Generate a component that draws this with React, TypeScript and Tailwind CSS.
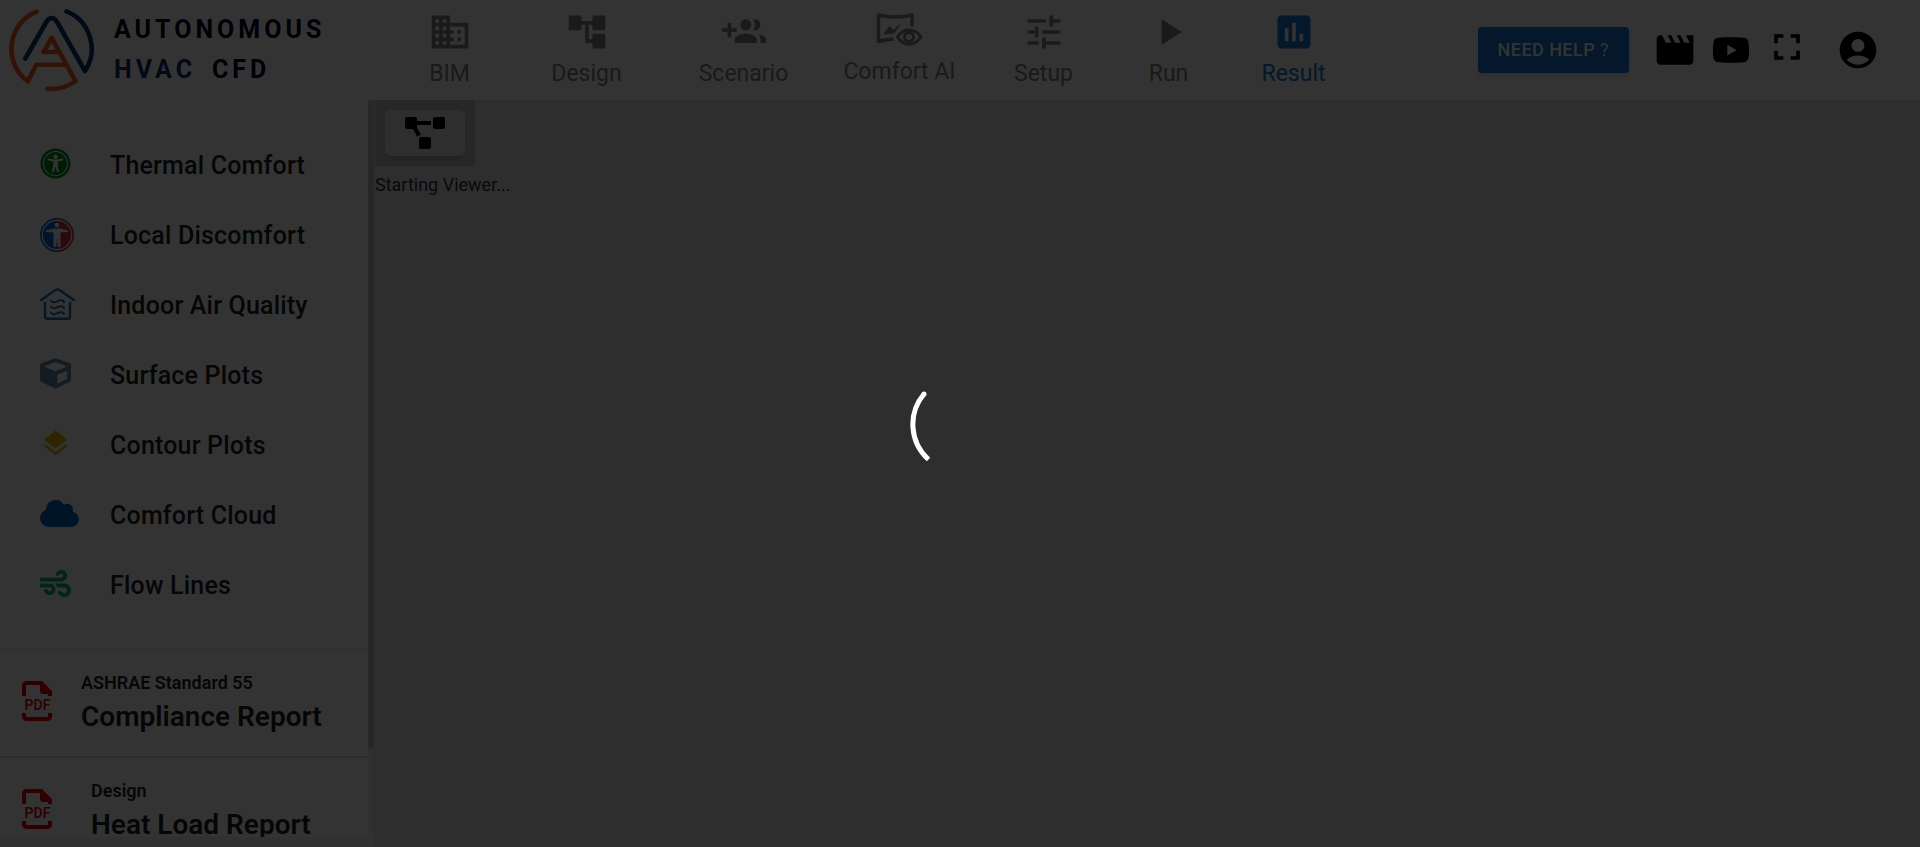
import type { ReactNode } from "react";
import {
  MdAccountCircle,
  MdAccountTree,
  MdAssessment,
  MdBusiness,
  MdFullscreen,
  MdLayers,
  MdMovie,
  MdPlayArrow,
  MdTune,
} from "react-icons/md";
import { FaCloud, FaCube, FaProjectDiagram, FaUniversalAccess, FaWind, FaYoutube } from "react-icons/fa";

function LogoMark() {
  return (
    <svg viewBox="0 0 88 84" className="h-[84px] w-[88px]" fill="none" strokeWidth="4.6" strokeLinecap="round" strokeLinejoin="round" aria-hidden="true">
      <path d="M28.500 3.600A40.400 40.400 0 0 0 19.800 73.500L28.300 56.800H57" stroke="#f05a1e" />
      <path d="M39.500 80.700A40.400 40.400 0 0 0 67.500 73L43.700 30L35.500 44H50" stroke="#f05a1e" />
      <path d="M58.500 3.400A40.400 40.400 0 0 1 77 63L48.800 13.500Q43.700 6.500 38.600 13.500L17.300 50.500" stroke="#05387a" />
    </svg>
  );
}

function GroupAddIcon() {
  return (
    <svg viewBox="0 0 24 24" className="size-11" fill="currentColor" aria-hidden="true">
      <path d="M8 10H5V7H3v3H0v2h3v3h2v-3h3v-2zm10 1c1.660 0 2.990-1.340 2.990-3S19.660 5 18 5c-.320 0-.630.050-.910.140.570.810.900 1.790.900 2.860s-.340 2.040-.900 2.860c.280.090.590.140.910.140zm-5 0c1.660 0 2.990-1.340 2.990-3S14.660 5 13 5c-1.660 0-3 1.340-3 3s1.340 3 3 3zm6.620 2.160c.830.730 1.380 1.660 1.380 2.840v2h3v-2c0-1.540-2.370-2.490-4.380-2.840zM13 13c-2 0-6 1-6 3v2h12v-2c0-2-4-3-6-3z" />
    </svg>
  );
}

function ComfortAiIcon() {
  return (
    <svg viewBox="0 0 48 42" className="h-[42px] w-12" fill="none" stroke="currentColor" strokeWidth="3.5" aria-hidden="true">
      <path d="M36 16.500V5C25.500 7.500 13.500 7.500 2.500 5V31.500C8 30 12.500 29.500 17.500 29" strokeLinejoin="round" />
      <path d="M7 24.500L13.500 16L17.500 20L23 14.500L24 15.500L18 23.500Z" fill="currentColor" stroke="none" />
      <path d="M21.500 27C27 17.500 39 17.500 45 27C39 36.500 27 36.500 21.500 27Z" strokeWidth="3" strokeLinejoin="round" />
      <circle cx="33" cy="27" r="4.500" strokeWidth="3" />
    </svg>
  );
}

function LocalDiscomfortIcon() {
  return (
    <svg viewBox="0 0 34 34" className="size-[34px]" aria-hidden="true">
      <path d="M17 0a17 17 0 0 0 0 34z" fill="#0d5fd8" />
      <path d="M17 0a17 17 0 0 1 0 34z" fill="#c8323c" />
      <circle cx="17" cy="17" r="14.700" fill="none" stroke="#fff" strokeWidth="1.200" />
      <circle cx="17" cy="7" r="2.300" fill="#fff" />
      <path d="M6 12.500L14 10.500H20L28 12.500V14L20.500 14.500V29H17.800L17 20L16.200 29H13.500V14.500L6 14Z" fill="#fff" />
    </svg>
  );
}

function AirQualityIcon() {
  return (
    <svg viewBox="0 0 35 32" className="h-8 w-[35px]" fill="none" stroke="#1976c2" strokeWidth="2.400" strokeLinecap="round" strokeLinejoin="round" aria-hidden="true">
      <path d="M1.200 12L15.500 2Q17.500 0.800 19.500 2L33.800 12" />
      <path d="M5 15V28.200Q5 30.700 7.500 30.700H27.500Q30 30.700 30 28.200V15" />
      <path d="M11 12.500Q12 15 15.500 14Q20 11.500 22.500 12.500Q24 13 24 14.500M11 18.500Q12 21 15.500 20Q20 17.500 22.500 18.500Q24 19 24 20.500M11 24.500Q12 27 15.500 26Q20 23.500 22.500 24.500Q24 25 24 26" strokeWidth="2" />
    </svg>
  );
}

function PdfIcon() {
  return (
    <svg viewBox="0 0 30 40" className="h-10 w-[30px] shrink-0" fill="none" stroke="#f00000" strokeWidth="4" aria-hidden="true">
      <path d="M2 15V5Q2 2 5 2H19" />
      <path d="M18 0H20L30 10V15H26V13H21Q18 13 18 10Z" fill="#f00000" stroke="none" />
      <path d="M2 32V35Q2 38 5 38H25Q28 38 28 35V32" />
      <text
        x="15.500"
        y="29"
        textAnchor="middle"
        fill="#f00000"
        stroke="none"
        className="font-['Roboto',sans-serif] text-[14px] font-semibold"
      >
        PDF
      </text>
    </svg>
  );
}

type NavEntry = { label: string; icon: ReactNode; width: string; active?: boolean };

const navEntries: NavEntry[] = [
  { label: "BIM", icon: <MdBusiness className="size-11" />, width: "w-[125px]" },
  { label: "Design", icon: <MdAccountTree className="size-11" />, width: "w-[149px]" },
  { label: "Scenario", icon: <GroupAddIcon />, width: "w-[165px]" },
  { label: "Comfort AI", icon: <ComfortAiIcon />, width: "w-[147px]" },
  { label: "Setup", icon: <MdTune className="size-11" />, width: "w-[141px]" },
  { label: "Run", icon: <MdPlayArrow className="size-11" />, width: "w-[109px]" },
  { label: "Result", icon: <MdAssessment className="size-11" />, width: "w-[141px]", active: true },
];

const plots: { label: string; icon: ReactNode }[] = [
  { label: "Thermal Comfort", icon: <FaUniversalAccess className="size-[31px] text-[#008c14]" /> },
  { label: "Local Discomfort", icon: <LocalDiscomfortIcon /> },
  { label: "Indoor Air Quality", icon: <AirQualityIcon /> },
  { label: "Surface Plots", icon: <FaCube className="size-[31px] text-[#6488aa]" /> },
  { label: "Contour Plots", icon: <MdLayers className="size-[31px] text-[#e6b400]" /> },
  { label: "Comfort Cloud", icon: <FaCloud className="h-[31px] w-[39px] text-[#0064c8]" /> },
  { label: "Flow Lines", icon: <FaWind className="size-[31px] text-[#00b478]" /> },
];

function Header() {
  return (
    <header className="flex h-[100px] shrink-0 items-start bg-white">
      <a href="#home" className="flex w-[387px] shrink-0 items-start gap-[18px] pt-2 pl-2" aria-label="Autonomous HVAC CFD">
        <LogoMark />
        <span className="flex flex-col pt-0.5 text-[25px] leading-10 font-bold tracking-[4px] text-[#00001e]">
          <span>AUTONOMOUS</span>
          <span className="flex gap-4">
            <span className="text-[#0a2d6e]">HVAC</span>
            <span>CFD</span>
          </span>
        </span>
      </a>
      <nav className="flex pt-2.5">
        {navEntries.map((entry) => (
          <button
            key={entry.label}
            type="button"
            className={`flex flex-col items-center ${entry.width} ${entry.active ? "text-[#1976d2]" : "text-[#808080]"}`}
          >
            {entry.icon}
            <span className="text-[23px] leading-10 font-normal">{entry.label}</span>
          </button>
        ))}
      </nav>
      <div className="ml-auto flex h-full items-center pr-10">
        <button
          type="button"
          className="mr-6 h-[46px] rounded bg-[#1976d2] px-5 text-lg font-medium tracking-wide text-white shadow-md"
        >
          NEED HELP <span className="font-normal">?</span>
        </button>
        <button type="button" aria-label="Tutorials" className="mr-[15px]">
          <MdMovie className="size-11" />
        </button>
        <button type="button" aria-label="YouTube" className="mr-[15px]">
          <FaYoutube className="size-[38px]" />
        </button>
        <button type="button" aria-label="Fullscreen" className="mr-[27px] pb-1.5">
          <MdFullscreen className="size-11" />
        </button>
        <button type="button" aria-label="Account">
          <MdAccountCircle className="size-11" />
        </button>
      </div>
    </header>
  );
}

function Report({ kicker, title, inset }: { kicker: string; title: string; inset: string }) {
  return (
    <a href="#report" className="flex h-[106px] items-start pt-[31px] pl-[22px]">
      <PdfIcon />
      <span className={`-mt-2.5 flex flex-col font-semibold text-[#1e1e1e] ${inset}`}>
        <span className="text-lg leading-6">{kicker}</span>
        <span className="text-[28px] leading-11">{title}</span>
      </span>
    </a>
  );
}

function Sidebar() {
  return (
    <aside className="mb-2.5 flex w-[374px] shrink-0 overflow-hidden bg-white">
      <div className="h-full min-w-0 flex-1 overflow-hidden">
        <ul className="h-[549px] pt-[30px]">
          {plots.map((plot) => (
            <li key={plot.label} className="h-[70px]">
              <button type="button" className="flex h-full w-full items-start pt-4 pl-10 text-left">
                <span className="flex h-9 w-[70px] items-start pt-0.5">{plot.icon}</span>
                <span className="text-[25px] leading-10 font-medium tracking-[0.0075em] text-[#1e1e1e]">{plot.label}</span>
              </button>
            </li>
          ))}
        </ul>
        <div className="h-px bg-[#e0e0e0]" />
        <Report kicker="ASHRAE Standard 55" title="Compliance Report" inset="ml-[29px]" />
        <div className="h-0.5 bg-[#dcdcdc]" />
        <Report kicker="Design" title="Heat Load Report" inset="ml-[39px]" />
      </div>
      <div className="w-1.5 bg-[#f1f1f1]">
        <div className="h-[88%] rounded bg-[#c3c3c3]" />
      </div>
    </aside>
  );
}

function Viewer() {
  return (
    <main className="flex min-w-0 flex-1 flex-col items-start bg-[#e6e6e6] pl-px">
      <div className="bg-[#c3c3c3] p-2.5">
        <button
          type="button"
          aria-label="Model tree"
          className="flex h-[46px] w-20 items-center justify-center rounded-md bg-[#e6e6e6] shadow-md"
        >
          <FaProjectDiagram className="h-8 w-10" />
        </button>
      </div>
      <p className="pt-[5px] text-lg leading-7 text-[#323232]">Starting Viewer...</p>
    </main>
  );
}

export default function App() {
  return (
    <div className="flex h-screen flex-col overflow-hidden bg-[#f5f5f5] font-['Roboto',sans-serif] text-black">
      <Header />
      <div className="flex min-h-0 flex-1">
        <Sidebar />
        <Viewer />
      </div>
      <div role="status" aria-label="Loading" className="fixed inset-0 z-10 flex items-center justify-center bg-black/80">
        <svg viewBox="0 0 100 100" className="size-[100px]" fill="none" stroke="#fff" strokeWidth="5" aria-hidden="true">
          <path d="M14 20A47.200 47.200 0 0 0 18.500 85.500" />
          <circle cx="14" cy="20" r="2.500" fill="#fff" stroke="none" />
        </svg>
      </div>
    </div>
  );
}
